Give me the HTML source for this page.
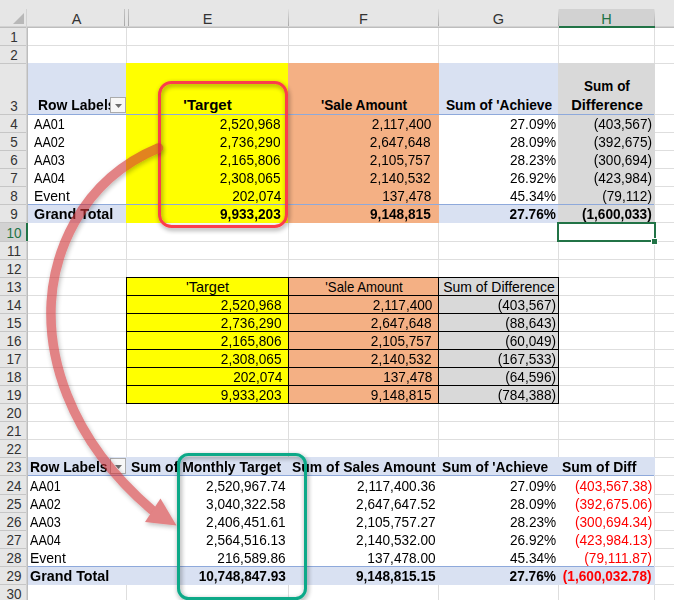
<!DOCTYPE html>
<html><head><meta charset="utf-8"><style>
html,body{margin:0;padding:0;}
body{width:674px;height:600px;overflow:hidden;position:relative;background:#fff;font-family:"Liberation Sans",sans-serif;}
body>div,body>svg{position:absolute;box-sizing:border-box;}
.t{white-space:nowrap;overflow:visible;}
</style></head><body>
<div style="left:126px;top:27px;width:1px;height:573px;background:#dedede;"></div>
<div style="left:288px;top:27px;width:1px;height:573px;background:#dedede;"></div>
<div style="left:438px;top:27px;width:1px;height:573px;background:#dedede;"></div>
<div style="left:558px;top:27px;width:1px;height:573px;background:#dedede;"></div>
<div style="left:654px;top:27px;width:1px;height:573px;background:#dedede;"></div>
<div style="left:27px;top:45px;width:647px;height:1px;background:#dedede;"></div>
<div style="left:27px;top:63px;width:647px;height:1px;background:#dedede;"></div>
<div style="left:27px;top:114px;width:647px;height:1px;background:#dedede;"></div>
<div style="left:27px;top:132px;width:647px;height:1px;background:#dedede;"></div>
<div style="left:27px;top:150px;width:647px;height:1px;background:#dedede;"></div>
<div style="left:27px;top:168px;width:647px;height:1px;background:#dedede;"></div>
<div style="left:27px;top:186px;width:647px;height:1px;background:#dedede;"></div>
<div style="left:27px;top:204px;width:647px;height:1px;background:#dedede;"></div>
<div style="left:27px;top:222px;width:647px;height:1px;background:#dedede;"></div>
<div style="left:27px;top:241px;width:647px;height:1px;background:#dedede;"></div>
<div style="left:27px;top:259px;width:647px;height:1px;background:#dedede;"></div>
<div style="left:27px;top:277px;width:647px;height:1px;background:#dedede;"></div>
<div style="left:27px;top:295px;width:647px;height:1px;background:#dedede;"></div>
<div style="left:27px;top:313px;width:647px;height:1px;background:#dedede;"></div>
<div style="left:27px;top:331px;width:647px;height:1px;background:#dedede;"></div>
<div style="left:27px;top:349px;width:647px;height:1px;background:#dedede;"></div>
<div style="left:27px;top:367px;width:647px;height:1px;background:#dedede;"></div>
<div style="left:27px;top:385px;width:647px;height:1px;background:#dedede;"></div>
<div style="left:27px;top:403px;width:647px;height:1px;background:#dedede;"></div>
<div style="left:27px;top:421px;width:647px;height:1px;background:#dedede;"></div>
<div style="left:27px;top:439px;width:647px;height:1px;background:#dedede;"></div>
<div style="left:27px;top:457px;width:647px;height:1px;background:#dedede;"></div>
<div style="left:27px;top:475px;width:647px;height:1px;background:#dedede;"></div>
<div style="left:27px;top:494px;width:647px;height:1px;background:#dedede;"></div>
<div style="left:27px;top:512px;width:647px;height:1px;background:#dedede;"></div>
<div style="left:27px;top:530px;width:647px;height:1px;background:#dedede;"></div>
<div style="left:27px;top:548px;width:647px;height:1px;background:#dedede;"></div>
<div style="left:27px;top:566px;width:647px;height:1px;background:#dedede;"></div>
<div style="left:27px;top:584px;width:647px;height:1px;background:#dedede;"></div>
<div style="left:26px;top:63px;width:629px;height:160px;background:#fff;"></div>
<div style="left:26px;top:457px;width:628px;height:128px;background:#fff;"></div>
<div style="left:26px;top:63px;width:101px;height:52px;background:#d9e1f2;"></div>
<div style="left:438px;top:63px;width:121px;height:52px;background:#d9e1f2;"></div>
<div style="left:26px;top:204px;width:101px;height:19px;background:#d9e1f2;"></div>
<div style="left:438px;top:204px;width:121px;height:19px;background:#d9e1f2;"></div>
<div style="left:126px;top:63px;width:163px;height:160px;background:#ffff00;"></div>
<div style="left:288px;top:63px;width:151px;height:160px;background:#f4b084;"></div>
<div style="left:558px;top:63px;width:97px;height:160px;background:#d9d9d9;"></div>
<div style="left:27px;top:114px;width:627px;height:1px;background:#8ea9db;"></div>
<div style="left:27px;top:204px;width:627px;height:1px;background:#8ea9db;"></div>
<div style="left:126px;top:277px;width:163px;height:127px;background:#ffff00;"></div>
<div style="left:288px;top:277px;width:151px;height:127px;background:#f4b084;"></div>
<div style="left:438px;top:277px;width:121px;height:127px;background:#d9d9d9;"></div>
<div style="left:126px;top:277px;width:433px;height:1px;background:#000;"></div>
<div style="left:126px;top:295px;width:433px;height:1px;background:#000;"></div>
<div style="left:126px;top:313px;width:433px;height:1px;background:#000;"></div>
<div style="left:126px;top:331px;width:433px;height:1px;background:#000;"></div>
<div style="left:126px;top:349px;width:433px;height:1px;background:#000;"></div>
<div style="left:126px;top:367px;width:433px;height:1px;background:#000;"></div>
<div style="left:126px;top:385px;width:433px;height:1px;background:#000;"></div>
<div style="left:126px;top:403px;width:433px;height:1px;background:#000;"></div>
<div style="left:126px;top:277px;width:1px;height:127px;background:#000;"></div>
<div style="left:288px;top:277px;width:1px;height:127px;background:#000;"></div>
<div style="left:438px;top:277px;width:1px;height:127px;background:#000;"></div>
<div style="left:558px;top:277px;width:1px;height:127px;background:#000;"></div>
<div style="left:27px;top:457px;width:628px;height:19px;background:#d9e1f2;"></div>
<div style="left:27px;top:566px;width:628px;height:19px;background:#d9e1f2;"></div>
<div style="left:27px;top:475px;width:627px;height:1px;background:#8ea9db;"></div>
<div style="left:27px;top:566px;width:627px;height:1px;background:#8ea9db;"></div>
<div style="left:0px;top:0px;width:674px;height:27px;background:#e6e6e6;"></div>
<div style="left:0px;top:27px;width:27px;height:573px;background:#e6e6e6;"></div>
<div style="left:559px;top:9px;width:96px;height:17px;background:#d2d2d2;"></div>
<div style="left:0px;top:223px;width:26px;height:18px;background:#d2d2d2;"></div>
<div style="left:0px;top:26px;width:674px;height:1px;background:#d2d2d2;"></div>
<div style="left:0px;top:27px;width:674px;height:1px;background:#bdbdbd;"></div>
<div style="left:26px;top:9px;width:1px;height:591px;background:#d2d2d2;"></div>
<div style="left:27px;top:27px;width:1px;height:573px;background:#bdbdbd;"></div>
<div style="left:288px;top:9px;width:1px;height:17px;background:linear-gradient(#e0e0e0,#a8a8a8);"></div>
<div style="left:438px;top:9px;width:1px;height:17px;background:linear-gradient(#e0e0e0,#a8a8a8);"></div>
<div style="left:558px;top:9px;width:1px;height:17px;background:linear-gradient(#e0e0e0,#a8a8a8);"></div>
<div style="left:654px;top:9px;width:1px;height:17px;background:linear-gradient(#e0e0e0,#a8a8a8);"></div>
<div style="left:124px;top:9px;width:1px;height:17px;background:linear-gradient(#c4c4c4,#a8a8a8);"></div>
<div style="left:128px;top:9px;width:1px;height:17px;background:linear-gradient(#c4c4c4,#a8a8a8);"></div>
<div style="left:0px;top:45px;width:26px;height:1px;background:#c6c6c6;"></div>
<div style="left:0px;top:63px;width:26px;height:1px;background:#c6c6c6;"></div>
<div style="left:0px;top:114px;width:26px;height:1px;background:#c6c6c6;"></div>
<div style="left:0px;top:132px;width:26px;height:1px;background:#c6c6c6;"></div>
<div style="left:0px;top:150px;width:26px;height:1px;background:#c6c6c6;"></div>
<div style="left:0px;top:168px;width:26px;height:1px;background:#c6c6c6;"></div>
<div style="left:0px;top:186px;width:26px;height:1px;background:#c6c6c6;"></div>
<div style="left:0px;top:204px;width:26px;height:1px;background:#c6c6c6;"></div>
<div style="left:0px;top:222px;width:26px;height:1px;background:#c6c6c6;"></div>
<div style="left:0px;top:241px;width:26px;height:1px;background:#c6c6c6;"></div>
<div style="left:0px;top:259px;width:26px;height:1px;background:#c6c6c6;"></div>
<div style="left:0px;top:277px;width:26px;height:1px;background:#c6c6c6;"></div>
<div style="left:0px;top:295px;width:26px;height:1px;background:#c6c6c6;"></div>
<div style="left:0px;top:313px;width:26px;height:1px;background:#c6c6c6;"></div>
<div style="left:0px;top:331px;width:26px;height:1px;background:#c6c6c6;"></div>
<div style="left:0px;top:349px;width:26px;height:1px;background:#c6c6c6;"></div>
<div style="left:0px;top:367px;width:26px;height:1px;background:#c6c6c6;"></div>
<div style="left:0px;top:385px;width:26px;height:1px;background:#c6c6c6;"></div>
<div style="left:0px;top:403px;width:26px;height:1px;background:#c6c6c6;"></div>
<div style="left:0px;top:421px;width:26px;height:1px;background:#c6c6c6;"></div>
<div style="left:0px;top:439px;width:26px;height:1px;background:#c6c6c6;"></div>
<div style="left:0px;top:457px;width:26px;height:1px;background:#c6c6c6;"></div>
<div style="left:0px;top:475px;width:26px;height:1px;background:#c6c6c6;"></div>
<div style="left:0px;top:494px;width:26px;height:1px;background:#c6c6c6;"></div>
<div style="left:0px;top:512px;width:26px;height:1px;background:#c6c6c6;"></div>
<div style="left:0px;top:530px;width:26px;height:1px;background:#c6c6c6;"></div>
<div style="left:0px;top:548px;width:26px;height:1px;background:#c6c6c6;"></div>
<div style="left:0px;top:566px;width:26px;height:1px;background:#c6c6c6;"></div>
<div style="left:0px;top:584px;width:26px;height:1px;background:#c6c6c6;"></div>
<div style="left:559px;top:26px;width:96px;height:2px;background:#217346;"></div>
<div style="left:26px;top:223px;width:2px;height:18px;background:#217346;"></div>
<svg style="left:0;top:0" width="27" height="27"><polygon points="24,13 24,24 13,24" fill="#b8b8b8"/></svg>
<div class="t" style="top:8.98px;height:20px;line-height:20px;font-size:14.5px;color:#333;left:76.5px;transform:translateX(-50%) scaleX(1);">A</div>
<div class="t" style="top:8.98px;height:20px;line-height:20px;font-size:14.5px;color:#333;left:207.5px;transform:translateX(-50%) scaleX(1);">E</div>
<div class="t" style="top:8.98px;height:20px;line-height:20px;font-size:14.5px;color:#333;left:363.5px;transform:translateX(-50%) scaleX(1);">F</div>
<div class="t" style="top:8.98px;height:20px;line-height:20px;font-size:14.5px;color:#333;left:498.5px;transform:translateX(-50%) scaleX(1);">G</div>
<div class="t" style="top:8.98px;height:20px;line-height:20px;font-size:14.5px;color:#217346;left:606.5px;transform:translateX(-50%) scaleX(1);">H</div>
<div class="t" style="top:27.48px;height:20px;line-height:20px;font-size:14.5px;color:#333;left:13.5px;transform:translateX(-50%) scaleX(0.93);">1</div>
<div class="t" style="top:45.48px;height:20px;line-height:20px;font-size:14.5px;color:#333;left:13.5px;transform:translateX(-50%) scaleX(0.93);">2</div>
<div class="t" style="top:96.48px;height:20px;line-height:20px;font-size:14.5px;color:#333;left:13.5px;transform:translateX(-50%) scaleX(0.93);">3</div>
<div class="t" style="top:114.48px;height:20px;line-height:20px;font-size:14.5px;color:#333;left:13.5px;transform:translateX(-50%) scaleX(0.93);">4</div>
<div class="t" style="top:132.48px;height:20px;line-height:20px;font-size:14.5px;color:#333;left:13.5px;transform:translateX(-50%) scaleX(0.93);">5</div>
<div class="t" style="top:150.48px;height:20px;line-height:20px;font-size:14.5px;color:#333;left:13.5px;transform:translateX(-50%) scaleX(0.93);">6</div>
<div class="t" style="top:168.48px;height:20px;line-height:20px;font-size:14.5px;color:#333;left:13.5px;transform:translateX(-50%) scaleX(0.93);">7</div>
<div class="t" style="top:186.48px;height:20px;line-height:20px;font-size:14.5px;color:#333;left:13.5px;transform:translateX(-50%) scaleX(0.93);">8</div>
<div class="t" style="top:204.48px;height:20px;line-height:20px;font-size:14.5px;color:#333;left:13.5px;transform:translateX(-50%) scaleX(0.93);">9</div>
<div class="t" style="top:223.48px;height:20px;line-height:20px;font-size:14.5px;color:#217346;left:13.5px;transform:translateX(-50%) scaleX(0.93);">10</div>
<div class="t" style="top:241.48px;height:20px;line-height:20px;font-size:14.5px;color:#333;left:13.5px;transform:translateX(-50%) scaleX(0.93);">11</div>
<div class="t" style="top:259.48px;height:20px;line-height:20px;font-size:14.5px;color:#333;left:13.5px;transform:translateX(-50%) scaleX(0.93);">12</div>
<div class="t" style="top:277.48px;height:20px;line-height:20px;font-size:14.5px;color:#333;left:13.5px;transform:translateX(-50%) scaleX(0.93);">13</div>
<div class="t" style="top:295.48px;height:20px;line-height:20px;font-size:14.5px;color:#333;left:13.5px;transform:translateX(-50%) scaleX(0.93);">14</div>
<div class="t" style="top:313.48px;height:20px;line-height:20px;font-size:14.5px;color:#333;left:13.5px;transform:translateX(-50%) scaleX(0.93);">15</div>
<div class="t" style="top:331.48px;height:20px;line-height:20px;font-size:14.5px;color:#333;left:13.5px;transform:translateX(-50%) scaleX(0.93);">16</div>
<div class="t" style="top:349.48px;height:20px;line-height:20px;font-size:14.5px;color:#333;left:13.5px;transform:translateX(-50%) scaleX(0.93);">17</div>
<div class="t" style="top:367.48px;height:20px;line-height:20px;font-size:14.5px;color:#333;left:13.5px;transform:translateX(-50%) scaleX(0.93);">18</div>
<div class="t" style="top:385.48px;height:20px;line-height:20px;font-size:14.5px;color:#333;left:13.5px;transform:translateX(-50%) scaleX(0.93);">19</div>
<div class="t" style="top:403.48px;height:20px;line-height:20px;font-size:14.5px;color:#333;left:13.5px;transform:translateX(-50%) scaleX(0.93);">20</div>
<div class="t" style="top:421.48px;height:20px;line-height:20px;font-size:14.5px;color:#333;left:13.5px;transform:translateX(-50%) scaleX(0.93);">21</div>
<div class="t" style="top:439.48px;height:20px;line-height:20px;font-size:14.5px;color:#333;left:13.5px;transform:translateX(-50%) scaleX(0.93);">22</div>
<div class="t" style="top:457.48px;height:20px;line-height:20px;font-size:14.5px;color:#333;left:13.5px;transform:translateX(-50%) scaleX(0.93);">23</div>
<div class="t" style="top:476.48px;height:20px;line-height:20px;font-size:14.5px;color:#333;left:13.5px;transform:translateX(-50%) scaleX(0.93);">24</div>
<div class="t" style="top:494.48px;height:20px;line-height:20px;font-size:14.5px;color:#333;left:13.5px;transform:translateX(-50%) scaleX(0.93);">25</div>
<div class="t" style="top:512.48px;height:20px;line-height:20px;font-size:14.5px;color:#333;left:13.5px;transform:translateX(-50%) scaleX(0.93);">26</div>
<div class="t" style="top:530.48px;height:20px;line-height:20px;font-size:14.5px;color:#333;left:13.5px;transform:translateX(-50%) scaleX(0.93);">27</div>
<div class="t" style="top:548.48px;height:20px;line-height:20px;font-size:14.5px;color:#333;left:13.5px;transform:translateX(-50%) scaleX(0.93);">28</div>
<div class="t" style="top:566.48px;height:20px;line-height:20px;font-size:14.5px;color:#333;left:13.5px;transform:translateX(-50%) scaleX(0.93);">29</div>
<div class="t" style="top:584.48px;height:20px;line-height:20px;font-size:14.5px;color:#333;left:13.5px;transform:translateX(-50%) scaleX(0.93);">30</div>
<div class="t" style="top:94.70px;height:20px;line-height:20px;font-size:15px;color:#000;font-weight:bold;left:38px;transform:scaleX(0.93);transform-origin:left;">Row Labels</div>
<div class="t" style="top:94.70px;height:20px;line-height:20px;font-size:15px;color:#000;font-weight:bold;left:207.5px;transform:translateX(-50%) scaleX(1.0);">'Target</div>
<div class="t" style="top:94.70px;height:20px;line-height:20px;font-size:15px;color:#000;font-weight:bold;left:363.5px;transform:translateX(-50%) scaleX(0.91);">'Sale Amount</div>
<div class="t" style="top:94.70px;height:20px;line-height:20px;font-size:15px;color:#000;font-weight:bold;left:498.5px;transform:translateX(-50%) scaleX(0.915);">Sum of 'Achieve</div>
<div class="t" style="top:75.90px;height:20px;line-height:20px;font-size:15px;color:#000;font-weight:bold;left:606.5px;transform:translateX(-50%) scaleX(0.9);">Sum of</div>
<div class="t" style="top:94.70px;height:20px;line-height:20px;font-size:15px;color:#000;font-weight:bold;left:606.5px;transform:translateX(-50%) scaleX(0.975);">Difference</div>
<div class="t" style="top:114.08px;height:20px;line-height:20px;font-size:14.5px;color:#000;left:34px;transform:scaleX(0.87);transform-origin:left;">AA01</div>
<div class="t" style="top:114.08px;height:20px;line-height:20px;font-size:14.5px;color:#000;right:393px;transform:scaleX(0.94);transform-origin:right;">2,520,968</div>
<div class="t" style="top:114.08px;height:20px;line-height:20px;font-size:14.5px;color:#000;right:243px;transform:scaleX(0.94);transform-origin:right;">2,117,400</div>
<div class="t" style="top:114.08px;height:20px;line-height:20px;font-size:14.5px;color:#000;right:118px;transform:scaleX(0.94);transform-origin:right;">27.09%</div>
<div class="t" style="top:114.08px;height:20px;line-height:20px;font-size:14.5px;color:#000;right:22px;transform:scaleX(0.94);transform-origin:right;">(403,567)</div>
<div class="t" style="top:132.08px;height:20px;line-height:20px;font-size:14.5px;color:#000;left:34px;transform:scaleX(0.87);transform-origin:left;">AA02</div>
<div class="t" style="top:132.08px;height:20px;line-height:20px;font-size:14.5px;color:#000;right:393px;transform:scaleX(0.94);transform-origin:right;">2,736,290</div>
<div class="t" style="top:132.08px;height:20px;line-height:20px;font-size:14.5px;color:#000;right:243px;transform:scaleX(0.94);transform-origin:right;">2,647,648</div>
<div class="t" style="top:132.08px;height:20px;line-height:20px;font-size:14.5px;color:#000;right:118px;transform:scaleX(0.94);transform-origin:right;">28.09%</div>
<div class="t" style="top:132.08px;height:20px;line-height:20px;font-size:14.5px;color:#000;right:22px;transform:scaleX(0.94);transform-origin:right;">(392,675)</div>
<div class="t" style="top:150.08px;height:20px;line-height:20px;font-size:14.5px;color:#000;left:34px;transform:scaleX(0.87);transform-origin:left;">AA03</div>
<div class="t" style="top:150.08px;height:20px;line-height:20px;font-size:14.5px;color:#000;right:393px;transform:scaleX(0.94);transform-origin:right;">2,165,806</div>
<div class="t" style="top:150.08px;height:20px;line-height:20px;font-size:14.5px;color:#000;right:243px;transform:scaleX(0.94);transform-origin:right;">2,105,757</div>
<div class="t" style="top:150.08px;height:20px;line-height:20px;font-size:14.5px;color:#000;right:118px;transform:scaleX(0.94);transform-origin:right;">28.23%</div>
<div class="t" style="top:150.08px;height:20px;line-height:20px;font-size:14.5px;color:#000;right:22px;transform:scaleX(0.94);transform-origin:right;">(300,694)</div>
<div class="t" style="top:168.08px;height:20px;line-height:20px;font-size:14.5px;color:#000;left:34px;transform:scaleX(0.87);transform-origin:left;">AA04</div>
<div class="t" style="top:168.08px;height:20px;line-height:20px;font-size:14.5px;color:#000;right:393px;transform:scaleX(0.94);transform-origin:right;">2,308,065</div>
<div class="t" style="top:168.08px;height:20px;line-height:20px;font-size:14.5px;color:#000;right:243px;transform:scaleX(0.94);transform-origin:right;">2,140,532</div>
<div class="t" style="top:168.08px;height:20px;line-height:20px;font-size:14.5px;color:#000;right:118px;transform:scaleX(0.94);transform-origin:right;">26.92%</div>
<div class="t" style="top:168.08px;height:20px;line-height:20px;font-size:14.5px;color:#000;right:22px;transform:scaleX(0.94);transform-origin:right;">(423,984)</div>
<div class="t" style="top:186.08px;height:20px;line-height:20px;font-size:14.5px;color:#000;left:34px;transform:scaleX(0.965);transform-origin:left;">Event</div>
<div class="t" style="top:186.08px;height:20px;line-height:20px;font-size:14.5px;color:#000;right:393px;transform:scaleX(0.94);transform-origin:right;">202,074</div>
<div class="t" style="top:186.08px;height:20px;line-height:20px;font-size:14.5px;color:#000;right:243px;transform:scaleX(0.94);transform-origin:right;">137,478</div>
<div class="t" style="top:186.08px;height:20px;line-height:20px;font-size:14.5px;color:#000;right:118px;transform:scaleX(0.94);transform-origin:right;">45.34%</div>
<div class="t" style="top:186.08px;height:20px;line-height:20px;font-size:14.5px;color:#000;right:22px;transform:scaleX(0.94);transform-origin:right;">(79,112)</div>
<div class="t" style="top:203.90px;height:20px;line-height:20px;font-size:15px;color:#000;font-weight:bold;left:34px;transform:scaleX(0.955);transform-origin:left;">Grand Total</div>
<div class="t" style="top:203.90px;height:20px;line-height:20px;font-size:15px;color:#000;font-weight:bold;right:393px;transform:scaleX(0.91);transform-origin:right;">9,933,203</div>
<div class="t" style="top:203.90px;height:20px;line-height:20px;font-size:15px;color:#000;font-weight:bold;right:243px;transform:scaleX(0.91);transform-origin:right;">9,148,815</div>
<div class="t" style="top:203.90px;height:20px;line-height:20px;font-size:15px;color:#000;font-weight:bold;right:118px;transform:scaleX(0.91);transform-origin:right;">27.76%</div>
<div class="t" style="top:203.90px;height:20px;line-height:20px;font-size:15px;color:#000;font-weight:bold;right:22px;transform:scaleX(0.91);transform-origin:right;">(1,600,033)</div>
<div style="left:110px;top:97px;width:16px;height:16px;background:#f7f7f7;border:1px solid #ababab;"></div>
<svg style="left:110px;top:97px" width="16" height="16"><polygon points="5,7 12,7 8.5,11" fill="#6d6d6d"/></svg>
<div class="t" style="top:276.68px;height:20px;line-height:20px;font-size:14.5px;color:#000;left:207.5px;transform:translateX(-50%) scaleX(1.0);">'Target</div>
<div class="t" style="top:276.68px;height:20px;line-height:20px;font-size:14.5px;color:#000;left:363.5px;transform:translateX(-50%) scaleX(0.91);">'Sale Amount</div>
<div class="t" style="top:276.68px;height:20px;line-height:20px;font-size:14.5px;color:#000;left:498.5px;transform:translateX(-50%) scaleX(0.965);">Sum of Difference</div>
<div class="t" style="top:294.68px;height:20px;line-height:20px;font-size:14.5px;color:#000;right:392px;transform:scaleX(0.94);transform-origin:right;">2,520,968</div>
<div class="t" style="top:294.68px;height:20px;line-height:20px;font-size:14.5px;color:#000;right:242px;transform:scaleX(0.94);transform-origin:right;">2,117,400</div>
<div class="t" style="top:294.68px;height:20px;line-height:20px;font-size:14.5px;color:#000;right:118px;transform:scaleX(0.94);transform-origin:right;">(403,567)</div>
<div class="t" style="top:312.68px;height:20px;line-height:20px;font-size:14.5px;color:#000;right:392px;transform:scaleX(0.94);transform-origin:right;">2,736,290</div>
<div class="t" style="top:312.68px;height:20px;line-height:20px;font-size:14.5px;color:#000;right:242px;transform:scaleX(0.94);transform-origin:right;">2,647,648</div>
<div class="t" style="top:312.68px;height:20px;line-height:20px;font-size:14.5px;color:#000;right:118px;transform:scaleX(0.94);transform-origin:right;">(88,643)</div>
<div class="t" style="top:330.68px;height:20px;line-height:20px;font-size:14.5px;color:#000;right:392px;transform:scaleX(0.94);transform-origin:right;">2,165,806</div>
<div class="t" style="top:330.68px;height:20px;line-height:20px;font-size:14.5px;color:#000;right:242px;transform:scaleX(0.94);transform-origin:right;">2,105,757</div>
<div class="t" style="top:330.68px;height:20px;line-height:20px;font-size:14.5px;color:#000;right:118px;transform:scaleX(0.94);transform-origin:right;">(60,049)</div>
<div class="t" style="top:348.68px;height:20px;line-height:20px;font-size:14.5px;color:#000;right:392px;transform:scaleX(0.94);transform-origin:right;">2,308,065</div>
<div class="t" style="top:348.68px;height:20px;line-height:20px;font-size:14.5px;color:#000;right:242px;transform:scaleX(0.94);transform-origin:right;">2,140,532</div>
<div class="t" style="top:348.68px;height:20px;line-height:20px;font-size:14.5px;color:#000;right:118px;transform:scaleX(0.94);transform-origin:right;">(167,533)</div>
<div class="t" style="top:366.68px;height:20px;line-height:20px;font-size:14.5px;color:#000;right:392px;transform:scaleX(0.94);transform-origin:right;">202,074</div>
<div class="t" style="top:366.68px;height:20px;line-height:20px;font-size:14.5px;color:#000;right:242px;transform:scaleX(0.94);transform-origin:right;">137,478</div>
<div class="t" style="top:366.68px;height:20px;line-height:20px;font-size:14.5px;color:#000;right:118px;transform:scaleX(0.94);transform-origin:right;">(64,596)</div>
<div class="t" style="top:384.68px;height:20px;line-height:20px;font-size:14.5px;color:#000;right:392px;transform:scaleX(0.94);transform-origin:right;">9,933,203</div>
<div class="t" style="top:384.68px;height:20px;line-height:20px;font-size:14.5px;color:#000;right:242px;transform:scaleX(0.94);transform-origin:right;">9,148,815</div>
<div class="t" style="top:384.68px;height:20px;line-height:20px;font-size:14.5px;color:#000;right:118px;transform:scaleX(0.94);transform-origin:right;">(784,388)</div>
<div class="t" style="top:456.90px;height:20px;line-height:20px;font-size:15px;color:#000;font-weight:bold;left:30px;transform:scaleX(0.93);transform-origin:left;">Row Labels</div>
<div style="left:110px;top:458px;width:16px;height:16px;background:#f7f7f7;border:1px solid #ababab;"></div>
<svg style="left:110px;top:458px" width="16" height="16"><polygon points="5,7 12,7 8.5,11" fill="#6d6d6d"/></svg>
<div class="t" style="top:456.90px;height:20px;line-height:20px;font-size:15px;color:#000;font-weight:bold;left:131px;transform:scaleX(0.93);transform-origin:left;">Sum of Monthly Target</div>
<div class="t" style="top:456.90px;height:20px;line-height:20px;font-size:15px;color:#000;font-weight:bold;left:292px;transform:scaleX(0.93);transform-origin:left;">Sum of Sales Amount</div>
<div class="t" style="top:456.90px;height:20px;line-height:20px;font-size:15px;color:#000;font-weight:bold;left:442px;transform:scaleX(0.915);transform-origin:left;">Sum of 'Achieve</div>
<div class="t" style="top:456.90px;height:20px;line-height:20px;font-size:15px;color:#000;font-weight:bold;left:562px;transform:scaleX(0.93);transform-origin:left;">Sum of Diff</div>
<div class="t" style="top:476.08px;height:20px;line-height:20px;font-size:14.5px;color:#000;left:30px;transform:scaleX(0.87);transform-origin:left;">AA01</div>
<div class="t" style="top:476.08px;height:20px;line-height:20px;font-size:14.5px;color:#000;right:388px;transform:scaleX(0.94);transform-origin:right;">2,520,967.74</div>
<div class="t" style="top:476.08px;height:20px;line-height:20px;font-size:14.5px;color:#000;right:238px;transform:scaleX(0.94);transform-origin:right;">2,117,400.36</div>
<div class="t" style="top:476.08px;height:20px;line-height:20px;font-size:14.5px;color:#000;right:118px;transform:scaleX(0.94);transform-origin:right;">27.09%</div>
<div class="t" style="top:476.08px;height:20px;line-height:20px;font-size:14.5px;color:#ff0000;right:22px;transform:scaleX(0.94);transform-origin:right;">(403,567.38)</div>
<div class="t" style="top:494.08px;height:20px;line-height:20px;font-size:14.5px;color:#000;left:30px;transform:scaleX(0.87);transform-origin:left;">AA02</div>
<div class="t" style="top:494.08px;height:20px;line-height:20px;font-size:14.5px;color:#000;right:388px;transform:scaleX(0.94);transform-origin:right;">3,040,322.58</div>
<div class="t" style="top:494.08px;height:20px;line-height:20px;font-size:14.5px;color:#000;right:238px;transform:scaleX(0.94);transform-origin:right;">2,647,647.52</div>
<div class="t" style="top:494.08px;height:20px;line-height:20px;font-size:14.5px;color:#000;right:118px;transform:scaleX(0.94);transform-origin:right;">28.09%</div>
<div class="t" style="top:494.08px;height:20px;line-height:20px;font-size:14.5px;color:#ff0000;right:22px;transform:scaleX(0.94);transform-origin:right;">(392,675.06)</div>
<div class="t" style="top:512.08px;height:20px;line-height:20px;font-size:14.5px;color:#000;left:30px;transform:scaleX(0.87);transform-origin:left;">AA03</div>
<div class="t" style="top:512.08px;height:20px;line-height:20px;font-size:14.5px;color:#000;right:388px;transform:scaleX(0.94);transform-origin:right;">2,406,451.61</div>
<div class="t" style="top:512.08px;height:20px;line-height:20px;font-size:14.5px;color:#000;right:238px;transform:scaleX(0.94);transform-origin:right;">2,105,757.27</div>
<div class="t" style="top:512.08px;height:20px;line-height:20px;font-size:14.5px;color:#000;right:118px;transform:scaleX(0.94);transform-origin:right;">28.23%</div>
<div class="t" style="top:512.08px;height:20px;line-height:20px;font-size:14.5px;color:#ff0000;right:22px;transform:scaleX(0.94);transform-origin:right;">(300,694.34)</div>
<div class="t" style="top:530.08px;height:20px;line-height:20px;font-size:14.5px;color:#000;left:30px;transform:scaleX(0.87);transform-origin:left;">AA04</div>
<div class="t" style="top:530.08px;height:20px;line-height:20px;font-size:14.5px;color:#000;right:388px;transform:scaleX(0.94);transform-origin:right;">2,564,516.13</div>
<div class="t" style="top:530.08px;height:20px;line-height:20px;font-size:14.5px;color:#000;right:238px;transform:scaleX(0.94);transform-origin:right;">2,140,532.00</div>
<div class="t" style="top:530.08px;height:20px;line-height:20px;font-size:14.5px;color:#000;right:118px;transform:scaleX(0.94);transform-origin:right;">26.92%</div>
<div class="t" style="top:530.08px;height:20px;line-height:20px;font-size:14.5px;color:#ff0000;right:22px;transform:scaleX(0.94);transform-origin:right;">(423,984.13)</div>
<div class="t" style="top:548.08px;height:20px;line-height:20px;font-size:14.5px;color:#000;left:30px;transform:scaleX(0.965);transform-origin:left;">Event</div>
<div class="t" style="top:548.08px;height:20px;line-height:20px;font-size:14.5px;color:#000;right:388px;transform:scaleX(0.94);transform-origin:right;">216,589.86</div>
<div class="t" style="top:548.08px;height:20px;line-height:20px;font-size:14.5px;color:#000;right:238px;transform:scaleX(0.94);transform-origin:right;">137,478.00</div>
<div class="t" style="top:548.08px;height:20px;line-height:20px;font-size:14.5px;color:#000;right:118px;transform:scaleX(0.94);transform-origin:right;">45.34%</div>
<div class="t" style="top:548.08px;height:20px;line-height:20px;font-size:14.5px;color:#ff0000;right:22px;transform:scaleX(0.94);transform-origin:right;">(79,111.87)</div>
<div class="t" style="top:565.90px;height:20px;line-height:20px;font-size:15px;color:#000;font-weight:bold;left:30px;transform:scaleX(0.955);transform-origin:left;">Grand Total</div>
<div class="t" style="top:565.90px;height:20px;line-height:20px;font-size:15px;color:#000;font-weight:bold;right:388px;transform:scaleX(0.91);transform-origin:right;">10,748,847.93</div>
<div class="t" style="top:565.90px;height:20px;line-height:20px;font-size:15px;color:#000;font-weight:bold;right:238px;transform:scaleX(0.91);transform-origin:right;">9,148,815.15</div>
<div class="t" style="top:565.90px;height:20px;line-height:20px;font-size:15px;color:#000;font-weight:bold;right:118px;transform:scaleX(0.91);transform-origin:right;">27.76%</div>
<div class="t" style="top:565.90px;height:20px;line-height:20px;font-size:15px;color:#ff0000;font-weight:bold;right:22px;transform:scaleX(0.91);transform-origin:right;">(1,600,032.78)</div>
<div style="left:557px;top:222px;width:99px;height:20px;border:2px solid #217346;background:transparent"></div>
<div style="left:651px;top:238px;width:7px;height:7px;background:#217346;border:1px solid #fff;"></div>
<svg style="left:0;top:0" width="674" height="600" viewBox="0 0 674 600">
<defs>
<filter id="sh" x="-20%" y="-20%" width="140%" height="140%"><feGaussianBlur in="SourceAlpha" stdDeviation="2.5"/><feOffset dx="1" dy="2"/><feComponentTransfer><feFuncA type="linear" slope="0.45"/></feComponentTransfer><feMerge><feMergeNode/><feMergeNode in="SourceGraphic"/></feMerge></filter>
</defs>
<rect x="159.5" y="82.5" width="127" height="144" rx="12" fill="none" stroke="#fc3d4c" stroke-width="3" filter="url(#sh)"/>
<rect x="178.5" y="454.5" width="127" height="144" rx="10" fill="none" stroke="#0aa988" stroke-width="3" filter="url(#sh)"/>
<g filter="url(#sh)" opacity="0.6">
<path d="M158.50,148.00 C75.67,182.27 53.63,259.99 51.24,302.38 C48.56,350.04 63.07,433.81 152.00,510.00" fill="none" stroke="#d03034" stroke-width="9.5" stroke-linecap="round"/>
<polygon points="176.5,525.5 160.5,498.5 145,522" fill="#d03034"/>
</g>
</svg>
</body></html>
